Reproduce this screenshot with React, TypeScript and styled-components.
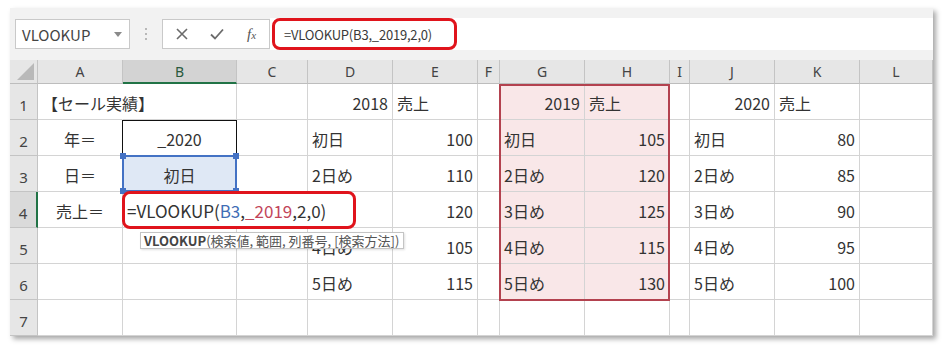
import React from 'react';
import styled, { createGlobalStyle } from 'styled-components';

const FONT = `"Noto Sans CJK JP", "Noto Sans", sans-serif`;

const GlobalStyle = createGlobalStyle`
  html, body { margin: 0; padding: 0; background: #fff; }
  body { font-family: ${FONT}; }
  * { box-sizing: border-box; }
`;

const Page = styled.div`
  padding: 8px 0 14px 10px;
`;

const Window = styled.div`
  width: 923px;
  background: #f2f2f2;
  box-shadow: 3px 3px 5px rgba(0, 0, 0, 0.35);
`;

const Toolbar = styled.div`
  height: 52px;
  display: flex;
  align-items: center;
  padding-left: 5px;
`;

const NameBox = styled.div`
  width: 115px;
  height: 30px;
  background: #fff;
  border: 1px solid #c9c9c9;
  display: flex;
  align-items: center;
  justify-content: space-between;
  padding: 0 7px 0 6px;
  font-size: 15px;
  color: #444;
`;

const Caret = styled.span`
  width: 0;
  height: 0;
  border-left: 4px solid transparent;
  border-right: 4px solid transparent;
  border-top: 5px solid #8a8a8a;
`;

const Dots = styled.div`
  width: 32px;
  display: flex;
  flex-direction: column;
  align-items: center;
  gap: 3px;
  & > span {
    width: 2px;
    height: 2px;
    background: #b8b8b8;
  }
`;

const FuncBox = styled.div`
  width: 108px;
  height: 30px;
  background: #fff;
  border: 1px solid #c9c9c9;
  display: grid;
  grid-template-columns: repeat(3, 35px);
  align-items: center;
  justify-items: center;
  padding-left: 1px;
`;

const Fx = styled.span`
  font-family: "Liberation Serif", serif;
  font-style: italic;
  font-size: 15px;
  color: #555;
  & > small {
    font-size: 11px;
  }
`;

const FormulaBar = styled.div`
  flex: 1;
  height: 32px;
  background: #fff;
  display: flex;
  align-items: center;
  padding-left: 2px;
`;

const FormulaMark = styled.div`
  width: 185px;
  height: 32px;
  border: 3px solid #e0141c;
  border-radius: 8px;
  display: flex;
  align-items: center;
  padding-left: 9px;
  font-size: 13px;
  letter-spacing: -0.2px;
  color: #3a3a3a;
`;

const COLS = ['A', 'B', 'C', 'D', 'E', 'F', 'G', 'H', 'I', 'J', 'K', 'L'];

const Sheet = styled.div`
  position: relative;
  display: grid;
  grid-template-columns: 28px 85px 114px 71px 85px 85px 22px 85px 85px 20px 85px 85px 73px;
  grid-template-rows: 24px repeat(7, 36px);
  background: #fff;
`;

const Corner = styled.div`
  grid-column: 1;
  grid-row: 1;
  background: #e6e6e6;
  border-right: 1px solid #c4c4c4;
  border-bottom: 1px solid #bdbdbd;
  position: relative;
  &::after {
    content: '';
    position: absolute;
    right: 3px;
    bottom: 3px;
    width: 17px;
    height: 17px;
    background: #b9b9b9;
    clip-path: polygon(100% 0, 100% 100%, 0 100%);
  }
`;

const ColHead = styled.div<{ $col: number; $active?: boolean }>`
  grid-column: ${(p) => p.$col};
  grid-row: 1;
  background: ${(p) => (p.$active ? '#d3d3d3' : '#e6e6e6')};
  border-right: 1px solid #c4c4c4;
  border-bottom: ${(p) => (p.$active ? '2px solid #217346' : '1px solid #bdbdbd')};
  display: flex;
  align-items: center;
  justify-content: center;
  font-family: "Noto Sans", sans-serif;
  font-size: 14px;
  color: ${(p) => (p.$active ? '#2a5a3e' : '#444')};
`;

const RowHead = styled.div<{ $row: number; $active?: boolean }>`
  grid-column: 1;
  grid-row: ${(p) => p.$row + 1};
  background: ${(p) => (p.$active ? '#dadada' : '#e6e6e6')};
  border-right: ${(p) => (p.$active ? '2px solid #217346' : '1px solid #c4c4c4')};
  border-bottom: 1px solid #c4c4c4;
  display: flex;
  align-items: center;
  justify-content: center;
  padding-top: 6px;
  font-family: "Noto Sans", sans-serif;
  font-size: 15px;
  color: #444;
`;

type Align = 'l' | 'r' | 'c';

const Cell = styled.div<{
  $col: number;
  $row: number;
  $align: Align;
  $tint?: boolean;
  $sel?: boolean;
  $open?: boolean;
}>`
  grid-column: ${(p) => p.$col};
  grid-row: ${(p) => p.$row + 1};
  border-right: 1px solid ${(p) => (p.$open ? 'transparent' : '#d4d4d4')};
  border-bottom: 1px solid #d4d4d4;
  background: ${(p) => (p.$tint ? '#f9e7e8' : p.$sel ? '#dfe8f5' : 'transparent')};
  display: flex;
  align-items: center;
  justify-content: ${(p) => (p.$align === 'r' ? 'flex-end' : p.$align === 'c' ? 'center' : 'flex-start')};
  padding: 2px 4px 0 4px;
  font-size: 16px;
  color: #333;
  white-space: nowrap;
  position: relative;
  z-index: 1;
`;

const RangeBox = styled.div`
  grid-column: 8 / 10;
  grid-row: 2 / 8;
  margin: 0 0 -1px -1px;
  border: 2px solid #b3424f;
  z-index: 2;
`;

const OutlineBox = styled.div`
  grid-column: 3;
  grid-row: 3;
  margin-left: -1px;
  border: 1px solid #111;
  border-bottom: none;
  z-index: 2;
`;

const SelBox = styled.div`
  grid-column: 3;
  grid-row: 4;
  margin: -1px 0 0 -1px;
  border: 2px solid #4472c4;
  position: relative;
  z-index: 3;
`;

const Handle = styled.span<{ $top: boolean; $left: boolean }>`
  position: absolute;
  width: 6px;
  height: 6px;
  background: #4472c4;
  ${(p) => (p.$top ? 'top: -4px;' : 'bottom: -4px;')}
  ${(p) => (p.$left ? 'left: -4px;' : 'right: -4px;')}
`;

const Callout = styled.div`
  position: absolute;
  left: 112px;
  top: 131px;
  width: 234px;
  height: 38px;
  border: 3px solid #e0141c;
  border-radius: 8px;
  z-index: 4;
`;

const Tip = styled.div`
  position: absolute;
  left: 130px;
  top: 172px;
  height: 17px;
  padding: 0 4px 0 3px;
  background: #fff;
  border: 1px solid #c4c4c4;
  font-size: 13px;
  line-height: 15px;
  color: #555;
  white-space: nowrap;
  z-index: 5;
  box-shadow: 1px 1px 2px rgba(0, 0, 0, 0.12);
  & > b {
    color: #444;
  }
`;

const RefBlue = styled.span`
  color: #3f6db5;
`;
const RefRed = styled.span`
  color: #c2455a;
`;

const FormulaText = styled.span`
  font-size: 17px;
  color: #333;
`;

type CellSpec = { c: string; t: React.ReactNode; a: Align };

const colIndex = (c: string) => COLS.indexOf(c) + 2;

const days = ['初日', '2日め', '3日め', '4日め', '5日め'];
const v2018 = ['100', '110', '120', '105', '115'];
const v2019 = ['105', '120', '125', '115', '130'];
const v2020 = ['80', '85', '90', '95', '100'];

const formula = (
  <FormulaText>
    =VLOOKUP(<RefBlue>B3</RefBlue>,<RefRed>_2019</RefRed>,2,0)
  </FormulaText>
);

const rows: CellSpec[][] = [
  [
    { c: 'A', t: '【セール実績】', a: 'l' },
    { c: 'D', t: '2018', a: 'r' },
    { c: 'E', t: '売上', a: 'l' },
    { c: 'G', t: '2019', a: 'r' },
    { c: 'H', t: '売上', a: 'l' },
    { c: 'J', t: '2020', a: 'r' },
    { c: 'K', t: '売上', a: 'l' },
  ],
];

for (let i = 0; i < 6; i++) {
  const r: CellSpec[] = [];
  if (i === 0) r.push({ c: 'A', t: '年＝', a: 'c' }, { c: 'B', t: '_2020', a: 'c' });
  if (i === 1) r.push({ c: 'A', t: '日＝', a: 'c' }, { c: 'B', t: '初日', a: 'c' });
  if (i === 2) r.push({ c: 'A', t: '売上＝', a: 'c' }, { c: 'B', t: formula, a: 'l' });
  if (i < 5) {
    if (i !== 2) r.push({ c: 'D', t: days[i], a: 'l' });
    r.push(
      { c: 'E', t: v2018[i], a: 'r' },
      { c: 'G', t: days[i], a: 'l' },
      { c: 'H', t: v2019[i], a: 'r' },
      { c: 'J', t: days[i], a: 'l' },
      { c: 'K', t: v2020[i], a: 'r' }
    );
  }
  rows.push(r);
}

const openCells = new Set(['A1', 'B4', 'C4']);

export default function App() {
  const cells: React.ReactNode[] = [];
  for (let r = 1; r <= 7; r++) {
    const specs = rows[r - 1] || [];
    for (const c of COLS) {
      const spec = specs.find((s) => s.c === c);
      const key = `${c}${r}`;
      const tint = (c === 'G' || c === 'H') && r <= 6;
      cells.push(
        <Cell
          key={key}
          $col={colIndex(c)}
          $row={r}
          $align={spec ? spec.a : 'l'}
          $tint={tint}
          $sel={key === 'B3'}
          $open={openCells.has(key)}
        >
          {spec ? spec.t : null}
        </Cell>
      );
    }
  }

  return (
    <>
      <GlobalStyle />
      <Page>
        <Window>
          <Toolbar>
            <NameBox>
              VLOOKUP
              <Caret />
            </NameBox>
            <Dots>
              <span />
              <span />
              <span />
            </Dots>
            <FuncBox>
              <svg width="14" height="14" viewBox="0 0 14 14">
                <path d="M2 2 L12 12 M12 2 L2 12" stroke="#6b6b6b" strokeWidth="1.6" fill="none" />
              </svg>
              <svg width="16" height="14" viewBox="0 0 16 14">
                <path d="M2 7.5 L6 11.5 L14 2.5" stroke="#6b6b6b" strokeWidth="1.8" fill="none" />
              </svg>
              <Fx>
                f<small>x</small>
              </Fx>
            </FuncBox>
            <FormulaBar>
              <FormulaMark>=VLOOKUP(B3,_2019,2,0)</FormulaMark>
            </FormulaBar>
          </Toolbar>
          <Sheet>
            <Corner />
            {COLS.map((c, i) => (
              <ColHead key={c} $col={i + 2} $active={c === 'B'}>
                {c}
              </ColHead>
            ))}
            {[1, 2, 3, 4, 5, 6, 7].map((r) => (
              <RowHead key={r} $row={r} $active={r === 4}>
                {r}
              </RowHead>
            ))}
            {cells}
            <RangeBox />
            <OutlineBox />
            <SelBox>
              <Handle $top $left />
              <Handle $top $left={false} />
              <Handle $top={false} $left />
              <Handle $top={false} $left={false} />
            </SelBox>
            <Callout />
            <Tip>
              <b>VLOOKUP</b>(検索値, 範囲, 列番号, [検索方法])
            </Tip>
          </Sheet>
        </Window>
      </Page>
    </>
  );
}
